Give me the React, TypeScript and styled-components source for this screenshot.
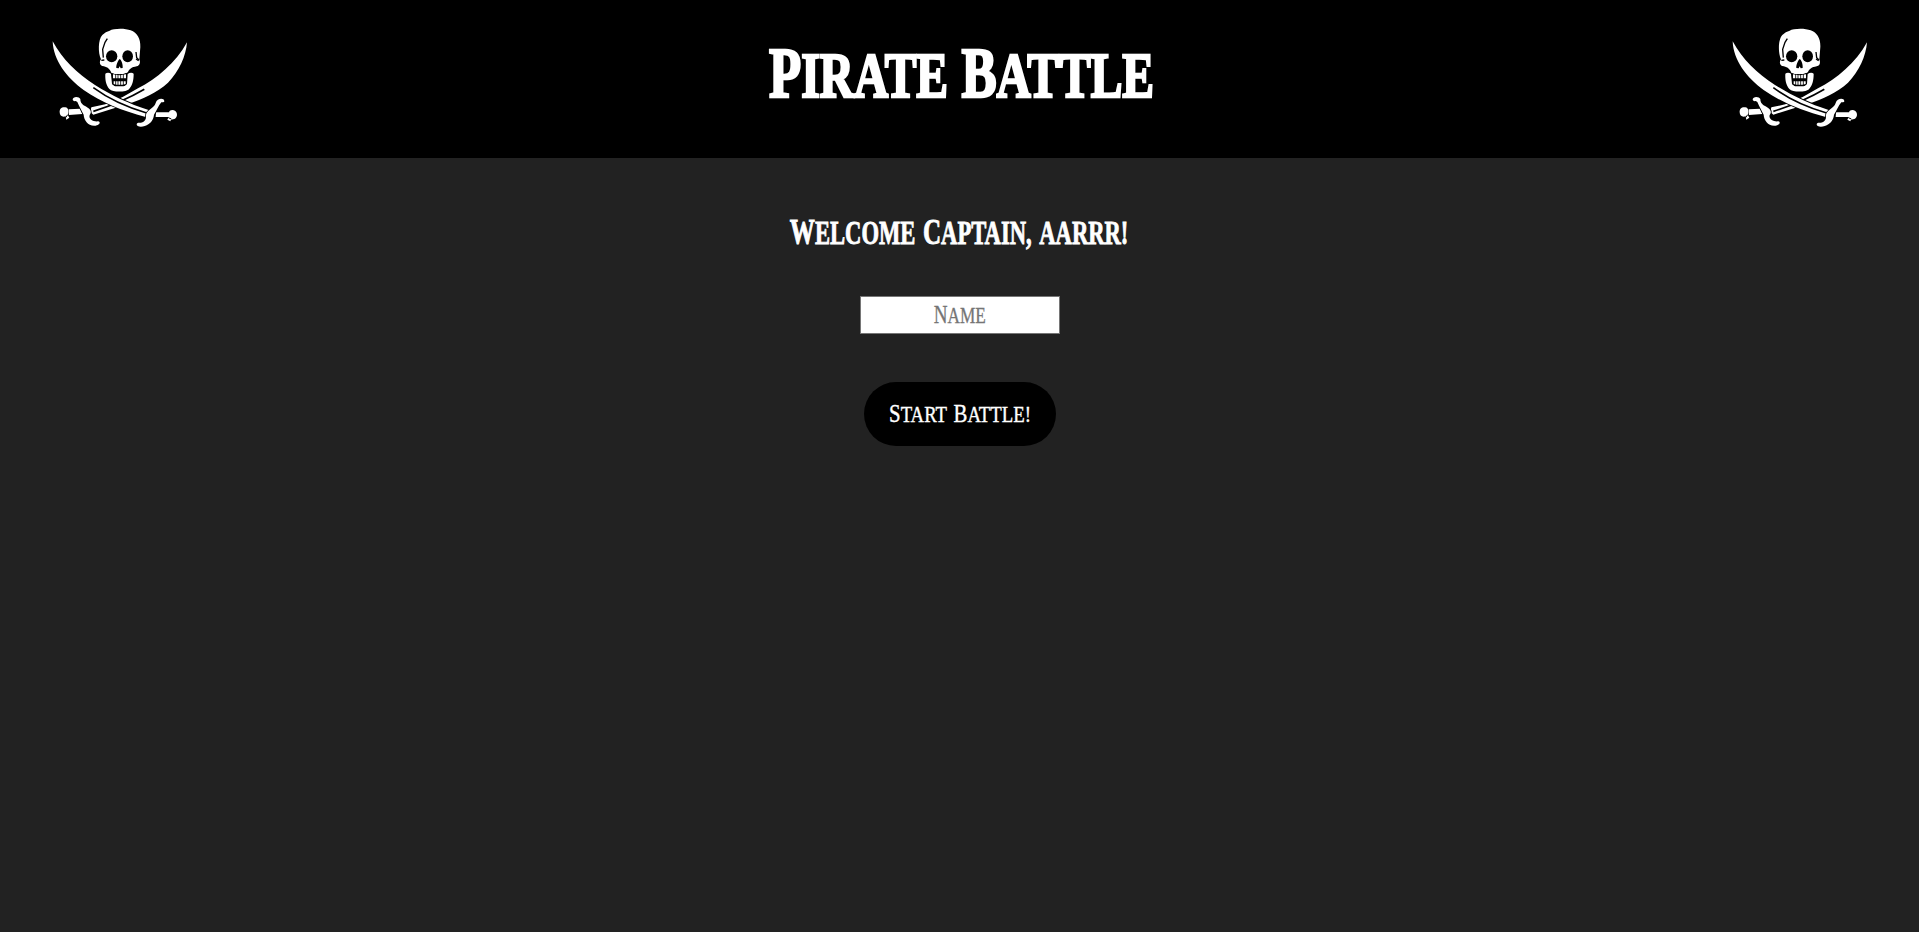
import React from "react";
import styled, { createGlobalStyle } from "styled-components";

const GlobalStyle = createGlobalStyle`
  * { box-sizing: border-box; }
  body {
    margin: 0;
    min-height: 100vh;
    background: #222;
    color: #fff;
    font-family: "Liberation Serif", serif;
  }
`;

const Header = styled.header`
  display: flex;
  justify-content: space-between;
  height: 158px;
  overflow: hidden;
  background: #000;

  > :last-child {
    margin-right: -1px;
  }
`;

const Flag = styled.svg`
  display: block;
  flex: none;
  width: 240px;
  height: 158px;
`;

const Title = styled.h1`
  margin: 0;
  padding: 33px 0 0 3px;
  -webkit-text-stroke: 2.6px #fff;
`;

const Main = styled.main`
  display: flex;
  flex-direction: column;
  align-items: center;
`;

const Welcome = styled.h2`
  margin: 0;
  padding-top: 53px;
  height: 138px;
  -webkit-text-stroke: 0.9px #fff;
`;

const Field = styled.label`
  position: relative;
  display: flex;
  justify-content: center;
  width: 200px;
  height: 38px;
`;

const NameInput = styled.input`
  width: 100%;
  height: 100%;
  padding: 0;
  border: 1px solid #767676;
  border-radius: 0;
  background: #fff;
  text-align: center;
  font: 24px "Liberation Serif", serif;
`;

const Prompt = styled.span`
  position: absolute;
  inset: 4px 0 auto 1px;
  display: flex;
  justify-content: center;
  color: #757575;
  -webkit-text-stroke: 0.3px #757575;
  pointer-events: none;
`;

const StartButton = styled.button`
  display: flex;
  justify-content: center;
  align-items: flex-start;
  width: 192px;
  height: 64px;
  margin: 48px 0 0;
  padding: 17px 0 0;
  border: 0;
  border-radius: 32px;
  background: #000;
  color: #fff;
  -webkit-text-stroke: 0.4px #fff;
`;

const Line = styled.span<{ $size: number; $gap: number; $stretch: number }>`
  display: flex;
  justify-content: center;
  align-items: baseline;
  gap: ${(p) => p.$gap}px;
  font-family: "Liberation Serif", serif;
  font-size: ${(p) => p.$size}px;
  line-height: 1.15;
  white-space: nowrap;
  text-transform: uppercase;
  transform: scaleX(${(p) => p.$stretch});
`;

const Word = styled.span<{ $initial: boolean }>`
  display: inline-block;
  &::first-letter {
    font-size: ${(p) => (p.$initial ? "1.11em" : "1em")};
  }
`;

type LetteringProps = { text: string; size: number; gap: number; stretch: number };

/* Condensed poster lettering: capitals throughout, with taller initials. */
function Lettering({ text, size, gap, stretch }: LetteringProps) {
  return (
    <Line $size={size} $gap={gap} $stretch={stretch}>
      {text.split(" ").map((word) => (
        <Word key={word} $initial={/^[A-Z]/.test(word)}>
          {word}
        </Word>
      ))}
    </Line>
  );
}

function JollyRoger() {
  return (
    <Flag viewBox="0 0 240 158" role="img" aria-label="Jolly Roger">
      <g transform="translate(40 10) scale(0.33333)" fill="#fff">
        {/* blade rising to the right */}
        <path d="M441 97C438 139 417 184 384 218C350 249 306 268 263 282L160 314L151 306L154 292L196 283L248 261L294 235C350 207 408 158 441 97Z" />
        <path d="M160 304Q245 278 313 238" fill="none" stroke="#000" strokeWidth="5" />
        {/* blade rising to the left */}
        <path d="M38 94C67 148 111 191 165 225C217 257 265 281 326 300L317 321C246 303 183 276 132 241C79 203 40 150 38 94Z" stroke="#000" strokeWidth="5" paintOrder="stroke" />
        <path d="M160 233C202 264 258 291 320 309" fill="none" stroke="#000" strokeWidth="5" />
        {/* left hilt */}
        <path d="M86 298L121 296L127 312L87 315Z" />
        <path d="M98 269C98 258 118 259 121 267C121 280 129 285 139 290C151 297 157 305 149 315C145 328 161 336 175 334C184 337 177 346 167 347C145 350 132 331 131 314C126 304 118 290 112 276C107 271 101 276 98 269Z" stroke="#000" strokeWidth="5" paintOrder="stroke" />
        <path d="M59 307C58 296 66 290 76 292C86 294 87 304 84 316L88 323L79 329L77 319C67 323 59 317 59 307Z" />
        <path d="M83 314L77 323" stroke="#000" strokeWidth="3" />
        {/* right hilt */}
        <path d="M348 307L388 307L389 321L347 321Z" />
        <path d="M373 274C373 263 351 264 347 279C343 292 331 295 322 306C313 317 323 323 313 333C303 343 292 334 290 343C289 353 313 353 325 343C337 335 341 323 342 314C350 302 355 287 364 277C368 275 371 279 373 274Z" stroke="#000" strokeWidth="5" paintOrder="stroke" />
        <path d="M387 309C386 300 399 298 406 303C414 309 412 324 403 327L393 329L391 334L382 329L386 321Z" />
        <path d="M385 323L394 327" stroke="#000" strokeWidth="3" />
        {/* jaw */}
        <path d="M196 191C200 187 208 187 213 191L216 222L224 228H254L261 222L263 192C269 187 277 187 281 191C281 210 278 225 268 236C260 247 219 248 208 237C198 225 195 209 196 191Z" />
        {/* cranium */}
        <path d="M209 62C220 55 255 54 272 61C292 68 302 87 301 111L298 148C302 157 300 167 290 169C275 172 269 176 264 186C257 194 220 195 214 188C208 174 200 170 187 168C178 165 178 154 183 148C174 128 174 89 187 75Q197 65 209 62Z" />
        <path d="M202 86L195 97L188 118L190 143M288 126L290 143L297 150" fill="none" stroke="#000" strokeWidth="4" />
        <path d="M184 151L193 150M288 147L296 152" stroke="#000" strokeWidth="4" />
        <ellipse cx="215" cy="139" rx="17" ry="18" fill="#000" />
        <ellipse cx="263" cy="139" rx="16" ry="18" fill="#000" />
        <path d="M239 147C233 152 228 166 229 174L236 175L239 169L242 175L248 174C249 163 245 151 239 147Z" fill="#000" />
        {/* teeth */}
        <path d="M215 189Q238 198 261 189L260 222L251 229H225L217 223Z" fill="#000" />
        <path d="M219 193V205H258V193Q238 198 219 193ZM221 214H257V222Q238 227 221 222Z" />
        <path d="M227 192V226M234 192V226M242 192V226M250 192V226" stroke="#000" strokeWidth="2.5" />
      </g>
    </Flag>
  );
}

export default function App() {
  return (
    <>
      <GlobalStyle />
      <Header>
        <JollyRoger />
        <Title>
          <Lettering text="Pirate Battle" size={64} gap={18} stretch={0.742} />
        </Title>
        <JollyRoger />
      </Header>
      <Main>
        <Welcome>
          <Lettering text="Welcome Captain, aarrr!" size={33} gap={11} stretch={0.685} />
        </Welcome>
        <Field>
          <NameInput type="text" aria-label="Name" />
          <Prompt>
            <Lettering text="Name" size={23} gap={0} stretch={0.75} />
          </Prompt>
        </Field>
        <StartButton type="button">
          <Lettering text="Start Battle!" size={23} gap={8} stretch={0.815} />
        </StartButton>
      </Main>
    </>
  );
}
